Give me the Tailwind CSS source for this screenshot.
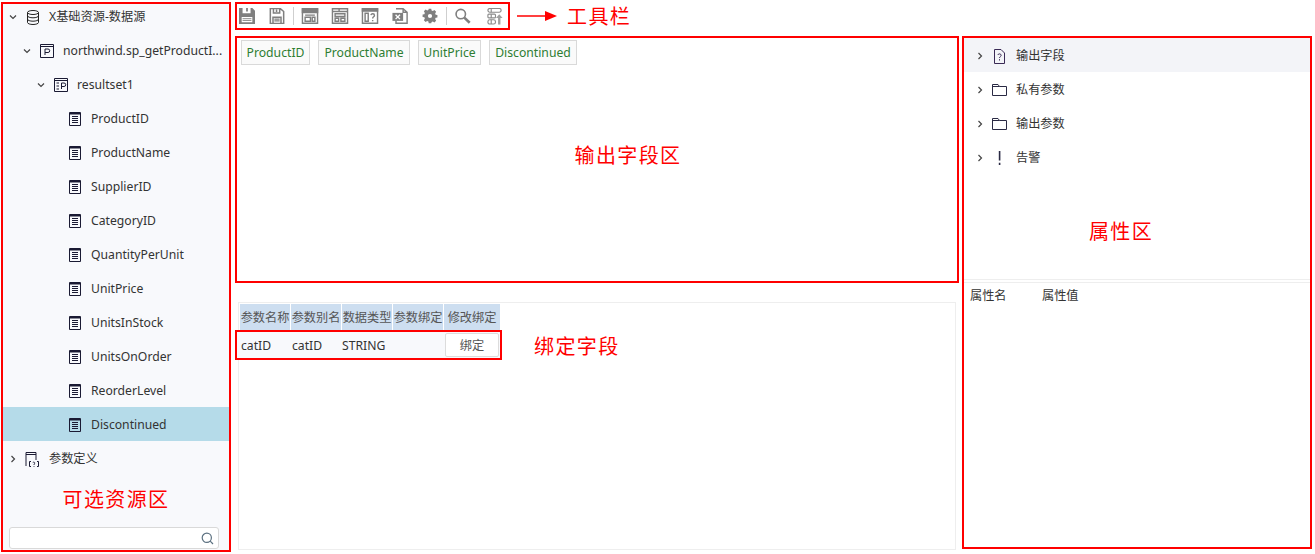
<!DOCTYPE html>
<html lang="zh-CN">
<head>
<meta charset="UTF-8">
<title>数据集设计</title>
<script src="https://cdn.jsdelivr.net/npm/@tailwindcss/browser@4"></script>
</head>
<body class="bg-white overflow-hidden">

<!-- shared tree icons -->
<svg class="hidden">
  <symbol id="chev-d" viewBox="0 0 8 8"><path d="M1 2.5 4 5.5 7 2.5" fill="none" stroke="#444" stroke-width="1.2"/></symbol>
  <symbol id="chev-r" viewBox="0 0 8 8"><path d="M2.5 1 5.5 4 2.5 7" fill="none" stroke="#444" stroke-width="1.2"/></symbol>
  <symbol id="doc" viewBox="0 0 14 14"><path d="M1.5.5h11v13h-11z" fill="none" stroke="#1a1a33"/><path d="M1.5 1h11v1.5h-11z" fill="#1a1a33"/><path d="M4 4.500h6M4 6.500h6M4 8.500h6M4 10.500h6" stroke="#1a1a33"/></symbol>
  <symbol id="folder" viewBox="0 0 15 12"><path d="M.5 11.500V.5h5.500l1.500 2h7v9zM.5 2.500h7" fill="none" stroke="#2a2a44"/></symbol>
</svg>

<div class="flex items-start w-[1315px] h-[554px] font-['Noto_Sans','Noto_Sans_CJK_SC',sans-serif] text-[12.2px] text-[#333]">

  <!-- 可选资源区 -->
  <aside class="ml-px mt-[2px] w-[230px] h-[550px] border-2 border-[#ff0000] bg-[#f8f9fc] flex flex-col overflow-hidden">
    <div class="-mt-[5px] -ml-[3px] -mr-[1px]">
      <div class="h-[34px] flex items-center pl-[9px] pt-[2px]">
        <svg class="w-2 h-2"><use href="#chev-d"/></svg>
        <svg class="w-[14px] h-[15px] ml-[9px]" viewBox="0 0 14 15" fill="none" stroke="#222"><ellipse cx="7" cy="2.5" rx="5.5" ry="2"/><path d="M1.5 2.5v10c0 1.100 2.500 2 5.500 2s5.500-.9 5.500-2v-10M1.500 5.800c0 1.100 2.500 2 5.500 2s5.500-.9 5.500-2M1.500 9.200c0 1.100 2.500 2 5.500 2s5.500-.9 5.500-2"/></svg>
        <span class="ml-[9px]">X基础资源-数据源</span>
      </div>
      <div class="h-[34px] flex items-center pl-[23px] pt-[2px]">
        <svg class="w-2 h-2"><use href="#chev-d"/></svg>
        <svg class="w-[14px] h-[14px] ml-[9px]" viewBox="0 0 14 14" fill="none" stroke="#1a1a33"><path d="M.5.5h13v13H.5zM.5 2.500h13"/><path d="M5 11V5h3a1.500 1.500 0 0 1 0 3.500H5"/></svg>
        <span class="ml-[9px]">northwind.sp_getProductI...</span>
      </div>
      <div class="h-[34px] flex items-center pl-[37px] pt-[2px]">
        <svg class="w-2 h-2"><use href="#chev-d"/></svg>
        <svg class="w-[14px] h-[14px] ml-[9px]" viewBox="0 0 14 14" fill="none" stroke="#1a1a33"><path d="M.5.5h13v13H.5zM.5 2.500h13M2.500 5H5M2.500 8H5M2.500 11H5"/><path d="M7.500 11V5h2.500a1.500 1.500 0 0 1 0 3.500H7.500"/></svg>
        <span class="ml-[9px]">resultset1</span>
      </div>
      <div class="h-[34px] flex items-center pl-[68px] pt-[2px]"><svg class="w-[14px] h-[14px]"><use href="#doc"/></svg><span class="ml-[9px]">ProductID</span></div>
      <div class="h-[34px] flex items-center pl-[68px] pt-[2px]"><svg class="w-[14px] h-[14px]"><use href="#doc"/></svg><span class="ml-[9px]">ProductName</span></div>
      <div class="h-[34px] flex items-center pl-[68px] pt-[2px]"><svg class="w-[14px] h-[14px]"><use href="#doc"/></svg><span class="ml-[9px]">SupplierID</span></div>
      <div class="h-[34px] flex items-center pl-[68px] pt-[2px]"><svg class="w-[14px] h-[14px]"><use href="#doc"/></svg><span class="ml-[9px]">CategoryID</span></div>
      <div class="h-[34px] flex items-center pl-[68px] pt-[2px]"><svg class="w-[14px] h-[14px]"><use href="#doc"/></svg><span class="ml-[9px]">QuantityPerUnit</span></div>
      <div class="h-[34px] flex items-center pl-[68px] pt-[2px]"><svg class="w-[14px] h-[14px]"><use href="#doc"/></svg><span class="ml-[9px]">UnitPrice</span></div>
      <div class="h-[34px] flex items-center pl-[68px] pt-[2px]"><svg class="w-[14px] h-[14px]"><use href="#doc"/></svg><span class="ml-[9px]">UnitsInStock</span></div>
      <div class="h-[34px] flex items-center pl-[68px] pt-[2px]"><svg class="w-[14px] h-[14px]"><use href="#doc"/></svg><span class="ml-[9px]">UnitsOnOrder</span></div>
      <div class="h-[34px] flex items-center pl-[68px] pt-[2px]"><svg class="w-[14px] h-[14px]"><use href="#doc"/></svg><span class="ml-[9px]">ReorderLevel</span></div>
      <div class="h-[34px] flex items-center pl-[68px] pt-[2px] bg-[#b5dbe9]"><svg class="w-[14px] h-[14px]"><use href="#doc"/></svg><span class="ml-[9px]">Discontinued</span></div>
      <div class="h-[34px] flex items-center pl-[9px] pt-[2px]">
        <svg class="w-2 h-2"><use href="#chev-r"/></svg>
        <svg class="w-[15px] h-[15px] ml-[8px]" viewBox="0 0 15 15" fill="none" stroke="#1a1a33"><path d="M1 14V.5h10V8M1 2.500h10"/><path d="M6 9.500H4.500v5H6M12 9.500h1.500v5H12" /><path d="M7.800 10.500c1.500-1 2.800.5 1.300 1.500v1M9 14v.8" stroke-width=".9"/></svg>
        <span class="ml-[9px]">参数定义</span>
      </div>
    </div>
    <div class="flex-1 flex items-center justify-center pb-[3px]">
      <span class="text-[20px] leading-none tracking-[1.4px] text-[#ff0000]">可选资源区</span>
    </div>
    <div class="ml-[6px] w-[210px] mb-[1px] h-[22px] bg-white border border-[#d9d9d9] rounded-[3px] flex items-center justify-end pr-[4px]">
      <svg class="w-[13px] h-[13px]" viewBox="0 0 13 13" fill="none" stroke="#5b7080" stroke-width="1.200"><circle cx="5.800" cy="5.800" r="4.600"/><path d="M9.200 9.200 12 12"/></svg>
    </div>
  </aside>

  <!-- 中间 -->
  <main class="ml-[4px] w-[724px] mt-[2px] flex flex-col">
    <div class="flex items-center h-[28px]">
      <div class="w-[275px] h-[28px] border-2 border-[#ff0000] flex items-center gap-[10px]">
        <svg class="w-5 h-4" viewBox="0 0 20 18"><path fill="#7f7f7f" fill-rule="evenodd" d="M1 0h15l3 3v15H1zM5 0v6h9V0h-3v4H9V0zM4 10v6h12v-6z"/><path d="M5 12h10M5 14h10" stroke="#7f7f7f"/></svg>
        <svg class="w-5 h-4" viewBox="0 0 20 18" fill="none" stroke="#7f7f7f"><path d="M2.500.5h11l4 3.500v13.500h-15zM6 .5v5h7v-5M5.500 17.500v-7h9v7" stroke-width="1.700"/><path d="M9.500 1.500v3" stroke-width="1.800"/><path d="M7 12.500h6M7 14.500h6" stroke-width="1.200"/></svg>
        <span class="w-px h-[18px] bg-[#cfcfcf] -mx-[4px]"></span>
        <svg class="w-5 h-4" viewBox="0 0 20 18" fill="none" stroke="#7f7f7f" stroke-width="1.600"><path d="M1.500.8h17v16.400h-17z"/><path d="M1.500 1h17v4h-17z" fill="#7f7f7f"/><path d="M4.500 8h11M4.500 10.500h6V15h-6zM12.500 10.500h3V15h-3z"/></svg>
        <svg class="w-5 h-4" viewBox="0 0 20 18" fill="none" stroke="#7f7f7f" stroke-width="1.600"><path d="M1.500.8h17v16.400h-17zM1.500 4h17M9 .8V4M4.500 6.500h11v3h-11zM4.500 11.500h4V15h-4zM11 11.500h4.500V15H11z"/></svg>
        <svg class="w-5 h-4" viewBox="0 0 20 18" fill="none" stroke="#7f7f7f" stroke-width="1.600"><path d="M1.500.8h17v16.400h-17z"/><path d="M1.500 1h17v2.500h-17z" fill="#7f7f7f"/><path d="M4.500 6h3.500v9H4.500z"/><path d="M11 8c.5-2 4-2 4 .3 0 1.700-2 1.500-2 3.500M13 13.500V15" stroke-width="1.600"/></svg>
        <svg class="w-5 h-4" viewBox="0 0 20 18" fill="none" stroke="#7f7f7f" stroke-width="1.600"><path d="M5.500.8h8l4.500 4v12.400H5.500v-3M13.500.8v4h4.500"/><path d="M1.500 5.500h12v9h-12z" fill="#7f7f7f" stroke="none"/><path d="M5 7.500l5 5M10 7.500l-5 5" stroke="#fff" stroke-width="1.500"/></svg>
        <svg class="w-5 h-4" viewBox="0 0 20 19"><path fill="#7f7f7f" fill-rule="evenodd" d="M8.500 1h3l.4 2.100 1.500.6 1.800-1.200 2.100 2.100-1.200 1.800.6 1.500 2.100.4v3l-2.100.4-.6 1.500 1.200 1.800-2.100 2.100-1.800-1.200-1.500.6L11.500 18h-3l-.4-2.100-1.500-.6-1.800 1.200-2.100-2.100 1.200-1.800-.6-1.500-2.100-.4v-3l2.100-.4.6-1.500-1.200-1.800 2.100-2.100 1.800 1.200 1.500-.6zM10 7a2.500 2.500 0 1 0 0 5 2.500 2.500 0 0 0 0-5z"/></svg>
        <span class="w-px h-[18px] bg-[#cfcfcf] -mx-[4px]"></span>
        <svg class="w-5 h-4" viewBox="0 0 20 18" fill="none" stroke="#7f7f7f"><circle cx="7.500" cy="6.800" r="5.300" stroke-width="1.800"/><path d="M11.500 10.800 17.500 16.500" stroke-width="3"/></svg>
        <svg class="w-5 h-[17px] ml-[2px]" viewBox="0 0 20 18" fill="none" stroke="#8a8a8a" stroke-width="1.200"><rect x="2.500" y=".5" width="14" height="4" rx="2"/><rect x="2.500" y="6.500" width="8" height="4" rx="1"/><rect x="2.500" y="12.500" width="8" height="4.500" rx="2"/><path d="M6 .5v4M6 6.500v4M6 12.500v4.500"/><path d="M14.500 17.500V8.500" stroke="#a0a0a0" stroke-width="2.500"/><path d="M11 10.500l3.500-4 3.500 4z" fill="#a0a0a0" stroke="none"/></svg>
      </div>
      <svg class="w-[40px] h-[12px] ml-[7px]" viewBox="0 0 40 12"><path d="M0 6h30" stroke="#ff0000" stroke-width="1.500"/><path d="M28 1l12 5-12 5z" fill="#ff0000"/></svg>
      <span class="ml-[10px] mt-[2px] text-[20px] leading-none tracking-[1.4px] text-[#ff0000]">工具栏</span>
    </div>

    <!-- 输出字段区 -->
    <section class="mt-[6px] h-[247px] border-2 border-[#ff0000] flex flex-col">
      <div class="flex gap-[8px] pl-[4px] pt-[2px] text-[#2e7d32]">
        <span class="h-[25px] w-[69px] pt-[2px] flex items-center justify-center bg-[#fafafa] border border-[#d9d9d9]">ProductID</span>
        <span class="h-[25px] w-[92px] pt-[2px] flex items-center justify-center bg-[#fafafa] border border-[#d9d9d9]">ProductName</span>
        <span class="h-[25px] w-[63px] pt-[2px] flex items-center justify-center bg-[#fafafa] border border-[#d9d9d9]">UnitPrice</span>
        <span class="h-[25px] w-[88px] pt-[2px] flex items-center justify-center bg-[#fafafa] border border-[#d9d9d9]">Discontinued</span>
      </div>
      <div class="flex-1 flex items-center justify-center pb-[35px] pl-[62px]">
        <span class="text-[20px] leading-none tracking-[1.4px] text-[#ff0000]">输出字段区</span>
      </div>
    </section>

    <!-- 绑定字段 -->
    <section class="mt-[19px] mx-[3px] h-[248px] border border-[#eeeeee] pl-px pt-px">
      <div class="flex gap-px h-[26px] text-[#555]">
        <span class="w-[50px] pt-[2px] bg-[#cddef0] flex items-center justify-center">参数名称</span>
        <span class="w-[50px] pt-[2px] bg-[#cddef0] flex items-center justify-center">参数别名</span>
        <span class="w-[50px] pt-[2px] bg-[#cddef0] flex items-center justify-center">数据类型</span>
        <span class="w-[50px] pt-[2px] bg-[#cddef0] flex items-center justify-center">参数绑定</span>
        <span class="w-[56px] pt-[2px] bg-[#cddef0] flex items-center justify-center">修改绑定</span>
      </div>
      <div class="flex items-center">
        <div class="-ml-[5px] w-[267px] h-[30px] border-2 border-[#ff0000] bg-[#f8f9fc] flex items-center">
          <span class="ml-[4px] w-[51px] pt-[2px]">catID</span>
          <span class="w-[50px] pt-[2px]">catID</span>
          <span class="w-[103px] pt-[2px]">STRING</span>
          <span class="w-[54px] h-[24px] pt-[2px] bg-white border border-[#dcdcdc] rounded-[2px] flex items-center justify-center text-[#555]">绑定</span>
        </div>
        <span class="ml-[32px] mt-[3px] text-[20px] leading-none tracking-[1.4px] text-[#ff0000]">绑定字段</span>
      </div>
    </section>
  </main>

  <!-- 属性区 -->
  <aside class="ml-[3px] mt-[36px] w-[350px] h-[513px] border-2 border-[#ff0000] flex flex-col">
    <div class="h-[242px] border-b border-[#eeeeee] flex flex-col">
      <div class="h-[34px] flex items-center pl-[12px] pt-[2px] bg-[#f3f4f8]">
        <svg class="w-2 h-2"><use href="#chev-r"/></svg>
        <svg class="w-[13px] h-[15px] ml-[9px]" viewBox="0 0 13 15" fill="none" stroke="#3a2a55"><path d="M1.500.5h6.500l3.500 3.500v10.500h-10z"/><path d="M4.800 6c.3-1.600 3.400-1.500 3.400.3 0 1.300-1.700 1.200-1.700 2.700M6.500 10.200v1.300"/></svg>
        <span class="ml-[10px]">输出字段</span>
      </div>
      <div class="h-[34px] flex items-center pl-[12px] pt-[2px]">
        <svg class="w-2 h-2"><use href="#chev-r"/></svg>
        <svg class="w-[15px] h-[12px] ml-[8px]"><use href="#folder"/></svg>
        <span class="ml-[9px]">私有参数</span>
      </div>
      <div class="h-[34px] flex items-center pl-[12px] pt-[2px]">
        <svg class="w-2 h-2"><use href="#chev-r"/></svg>
        <svg class="w-[15px] h-[12px] ml-[8px]"><use href="#folder"/></svg>
        <span class="ml-[9px]">输出参数</span>
      </div>
      <div class="h-[34px] flex items-center pl-[12px] pt-[2px]">
        <svg class="w-2 h-2"><use href="#chev-r"/></svg>
        <svg class="w-[15px] h-[14px] ml-[8px]" viewBox="0 0 15 14"><path d="M6.800 0h1.600v9.500H6.800zM6.800 11.800h1.600V14H6.800z" fill="#2a2a44"/></svg>
        <span class="ml-[9px]">告警</span>
      </div>
      <div class="flex-1 flex items-center justify-center pt-[10px] pr-[32px]">
        <span class="text-[20px] leading-none tracking-[1.4px] text-[#ff0000]">属性区</span>
      </div>
    </div>
    <div class="mt-[2px] pt-[4px] border-t border-[#eeeeee] flex h-[24px] items-center pl-[6px]">
      <span class="w-[72px]">属性名</span>
      <span>属性值</span>
    </div>
  </aside>
</div>
</body>
</html>
